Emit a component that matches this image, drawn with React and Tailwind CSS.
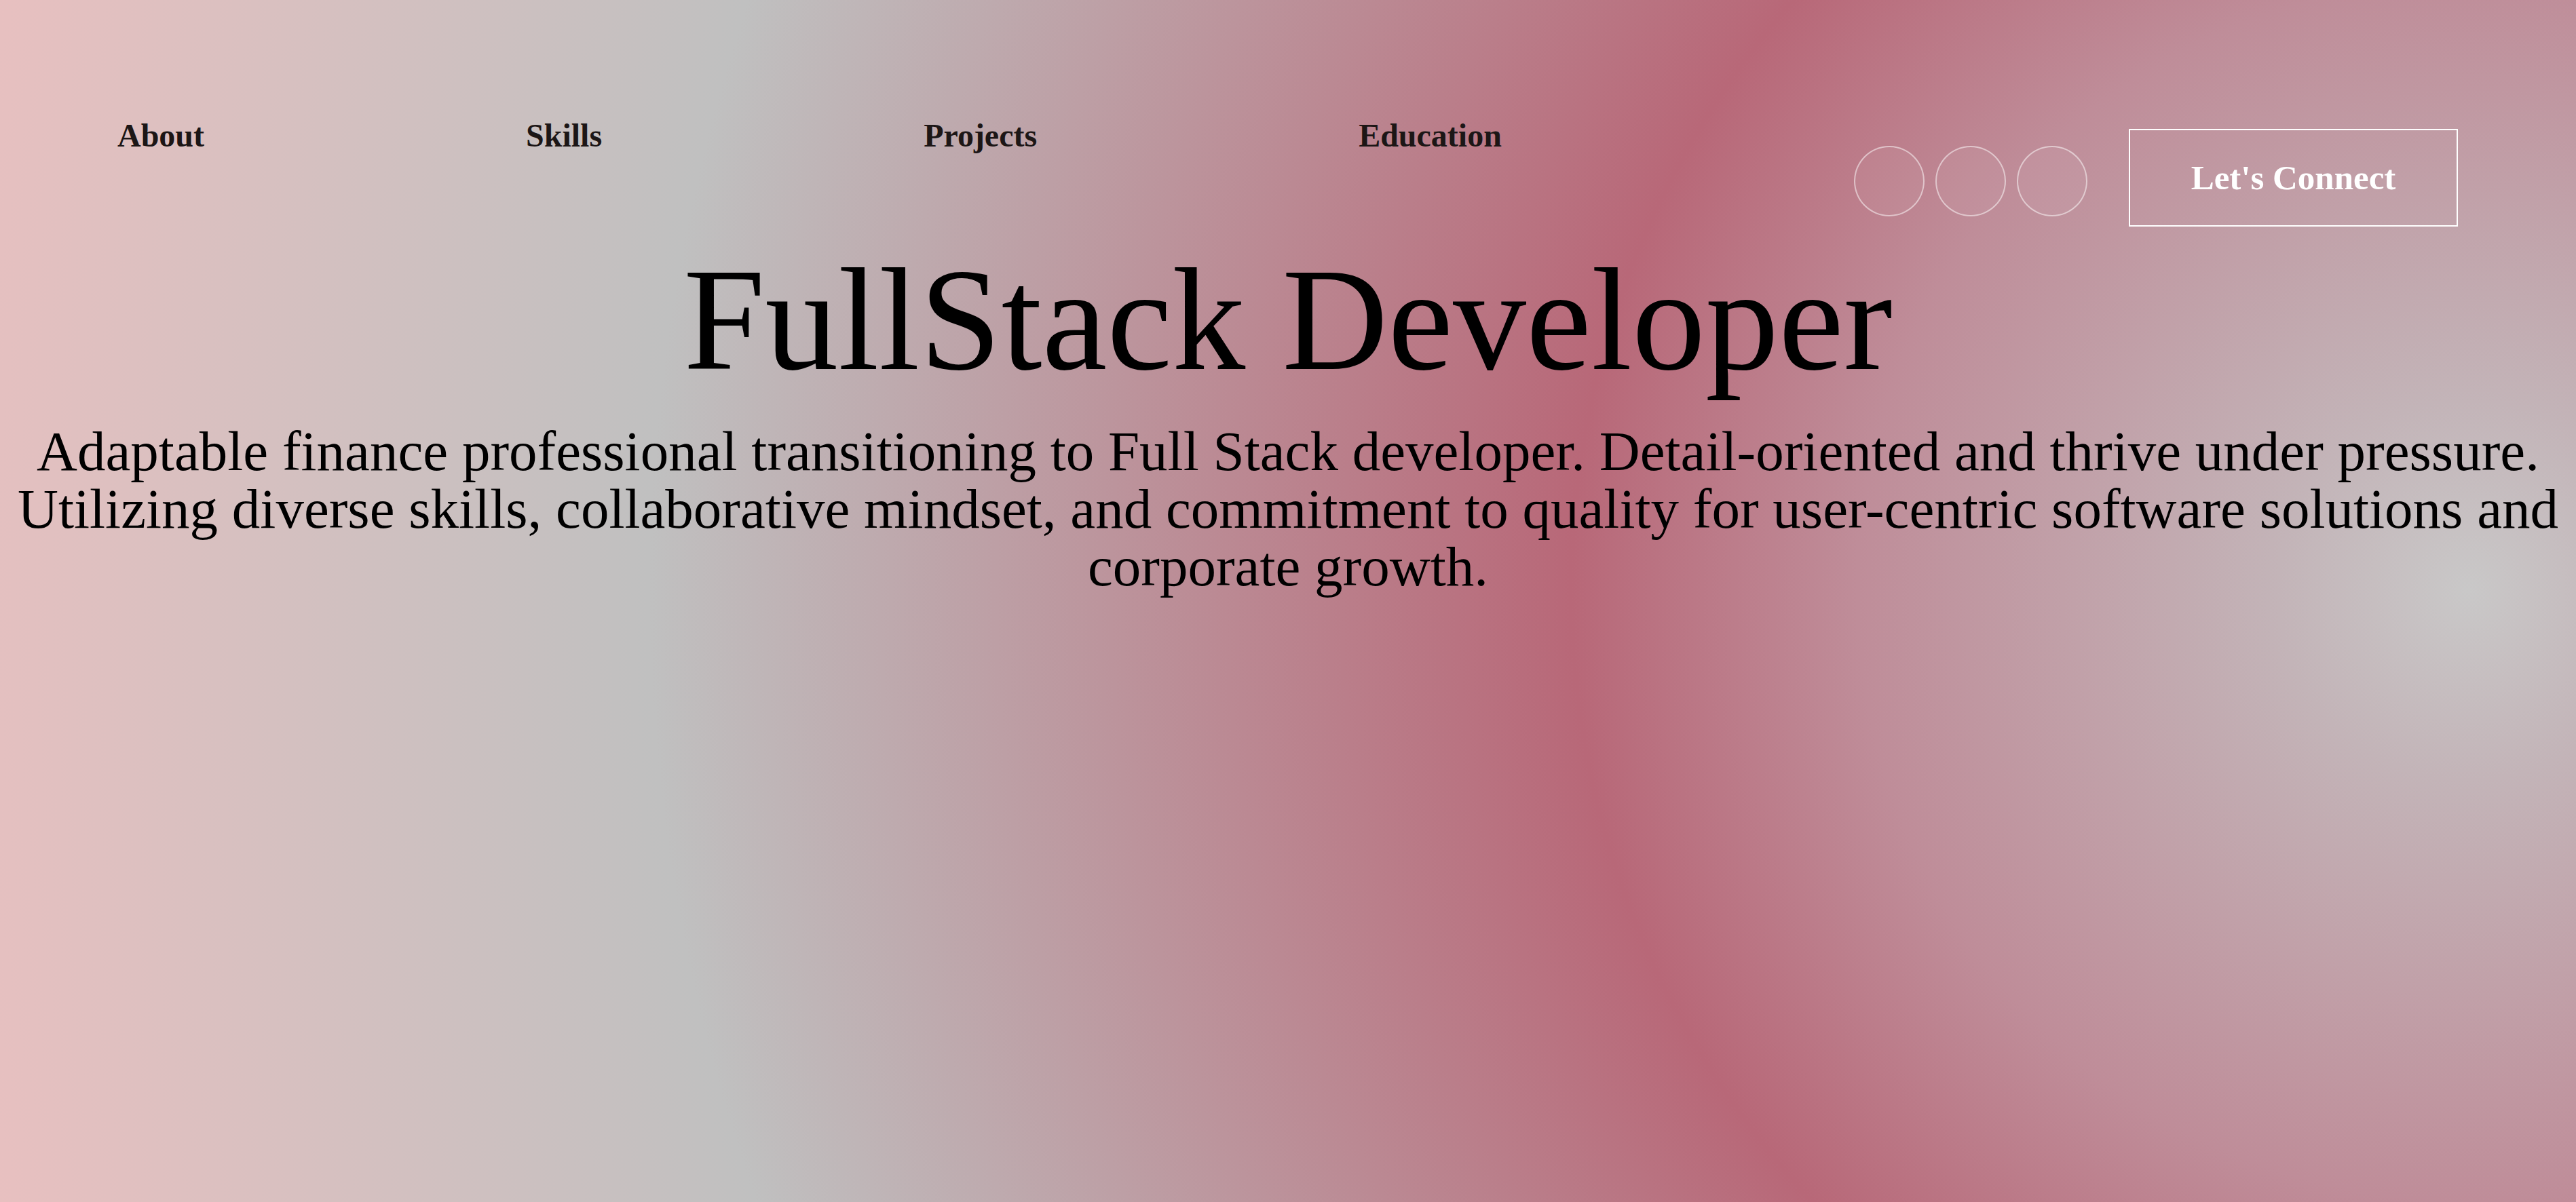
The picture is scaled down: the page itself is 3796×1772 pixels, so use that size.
import React from 'react';

const links = ['About', 'Skills', 'Projects', 'Education'];

export default function App() {
  return (
    <div className="min-h-screen w-full overflow-hidden font-['Liberation_Serif',_'Times_New_Roman',_serif] bg-[radial-gradient(circle_at_3637px_870px,#c9c8c8_0px,#c3b4b8_280px,#bf8d99_900px,#b86878_1321px,#c0c0c0_2680px,#e8c0c0_3750px)]">
      <header className="flex items-start justify-between pl-[173px] pr-[174px] pt-[173px]">
        <nav className="mt-[3px] flex gap-[474px]">
          {links.map((l) => (
            <a key={l} href="#" className="text-[48px] leading-none font-bold text-[#1c1616]">
              {l}
            </a>
          ))}
        </nav>
        <div className="mt-[17px] flex items-center">
          <div className="mt-[10px] flex gap-[16px]">
            <span className="block h-[104px] w-[104px] rounded-full border-2 border-white/50 bg-white/5" />
            <span className="block h-[104px] w-[104px] rounded-full border-2 border-white/50 bg-white/5" />
            <span className="block h-[104px] w-[104px] rounded-full border-2 border-white/50 bg-white/5" />
          </div>
          <button className="ml-[61px] flex h-[144px] w-[485px] items-center justify-center border-2 border-white text-[51px] font-bold text-white">
            Let's Connect
          </button>
        </div>
      </header>

      <section className="px-[16px] text-center text-black">
        <h1 className="mt-[30px] text-[216px] leading-none font-normal">FullStack Developer</h1>
        <p className="mt-[43px] text-[83px] leading-[85px]">
          Adaptable finance professional transitioning to Full Stack developer. Detail-oriented and thrive under
          pressure. Utilizing diverse skills, collaborative mindset, and commitment to quality for user-centric
          software solutions and corporate growth.
        </p>
      </section>
    </div>
  );
}
